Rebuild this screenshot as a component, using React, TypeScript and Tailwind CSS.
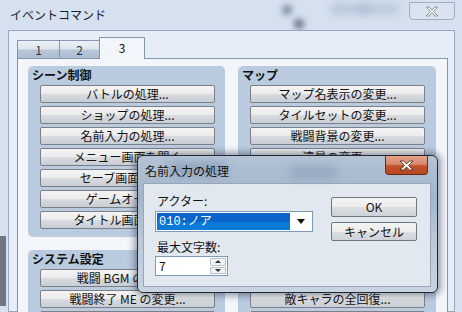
import React from "react";

const sceneButtons = [
    "バトルの処理...",
    "ショップの処理...",
    "名前入力の処理...",
    "メニュー画面を開く",
    "セーブ画面を開く",
    "ゲームオーバー",
    "タイトル画面に戻す",
];
const systemButtons = ["戦闘 BGM の変更...", "戦闘終了 ME の変更...", "セーブ禁止の変更..."];
const mapButtons = ["マップ名表示の変更...", "タイルセットの変更...", "戦闘背景の変更...", "遠景の変更...", "指定位置の情報取得..."];
const battleButtons = ["敵キャラの HP 増減...", "敵キャラの MP 増減...", "敵キャラのステート変更...", "敵キャラの全回復...", "敵キャラの出現..."];

function CmdButton({ label }: { label: string }) {
    return (
        <div className="h-[18px] w-[175px] shrink-0 flex items-center justify-center rounded-[2px] border border-[#7b8087] bg-[linear-gradient(#f4f4f4_0%,#ebebeb_50%,#d9dce0_50%,#c9ced6_100%)] text-[12px] leading-none text-[#111]">
            {label}
        </div>
    );
}

function Group({ title, items }: { title: string; items: string[] }) {
    return (
        <div className="rounded-[5px] bg-[#bacbdf] pl-[12px] pr-[10px] pb-[8px]">
            <div className="h-[19px] -ml-[8px] flex items-center pb-[1px] text-[12px] font-bold leading-none text-[#111]">{title}</div>
            <div className="flex flex-col gap-[3px]">
                {items.map((it) => (
                    <CmdButton key={it} label={it} />
                ))}
            </div>
        </div>
    );
}

function DlgButton({ label, h }: { label: string; h: string }) {
    return (
        <div className={`${h} w-[86px] flex items-center justify-center rounded-[2px] border border-[#6f7782] bg-[linear-gradient(#f4f4f4_0%,#ececec_50%,#dcdfe3_50%,#cdd2d8_100%)] text-[12px] leading-none text-[#111]`}>
            {label}
        </div>
    );
}

export default function App() {
    return (
        <div className="relative w-[462px] h-[312px] overflow-hidden bg-[#d5e1ee] font-['Noto_Sans_CJK_JP','Liberation_Sans',sans-serif]">
            {/* glass spots */}
            <div className="absolute left-[282px] top-[5px] w-[10px] h-[10px] rounded-full bg-[#4d5e7c] blur-[3px] opacity-70" />
            <div className="absolute left-[294px] top-[19px] w-[10px] h-[10px] rounded-full bg-[#3e4d68] blur-[3px] opacity-80" />
            <div className="absolute left-[330px] top-[4px] w-[40px] h-[10px] rounded-full bg-[#a5b7cf] blur-[4px] opacity-70" />
            <div className="absolute left-[360px] top-[4px] w-[40px] h-[10px] rounded-full bg-[#a5b7cf] blur-[4px] opacity-60" />
            <div className="absolute left-0 top-[236px] w-[6px] h-[70px] bg-[#2b2f36] opacity-60" />

            {/* close button */}
            <div className="absolute left-[409px] top-[2px] w-[46px] h-[18px] rounded-b-[4px] border border-[#9fb0c6] bg-[#dde6f1]/60 flex items-center justify-center">
                <svg width="14" height="11" viewBox="0 0 14 11">
                    <path d="M1 1h3l3 3 3-3h3l-4.5 4.5L13 10h-3L7 7l-3 3H1l4.5-4.5z" fill="#eef2f7" stroke="#7f8a99" strokeWidth="0.9" />
                </svg>
            </div>

            {/* title bar */}
            <div className="relative h-[30px] flex items-center pl-[10px] text-[12px] leading-none text-[#1a1f28]">
                イベントコマンド
            </div>

            {/* client */}
            <div className="relative ml-[8px] w-[447px] h-[282px] border border-[#95a8c2] bg-[#e6edf6] pt-[6px] pl-[8px]">
                <div className="flex items-end h-[21px]">
                    <div className="w-[43px] h-[18px] border border-[#8296b1] border-b-0 bg-[linear-gradient(#edf1f6_0%,#dde5ee_45%,#b6c6d8_55%,#aebfd3_100%)] flex items-center justify-center text-[12px] leading-none text-[#333]">
                        1
                    </div>
                    <div className="w-[41px] h-[18px] -ml-px border border-[#8296b1] border-b-0 bg-[linear-gradient(#edf1f6_0%,#dde5ee_45%,#b6c6d8_55%,#aebfd3_100%)] flex items-center justify-center text-[12px] leading-none text-[#333]">
                        2
                    </div>
                    <div className="relative z-10 w-[46px] h-[22px] -ml-px -mb-px border border-[#8296b1] border-b-0 bg-[#f2f5f9] flex items-center justify-center pb-[2px] text-[12px] leading-none text-[#111]">
                        3
                    </div>
                </div>
                <div className="w-[431px] h-[260px] border border-[#8296b1] bg-[#f2f5f9] flex gap-[13px] pl-[10px] pt-[7px]">
                    <div className="w-[197px] flex flex-col gap-[13px]">
                        <Group title="シーン制御" items={sceneButtons} />
                        <Group title="システム設定" items={systemButtons} />
                    </div>
                    <div className="w-[198px] flex flex-col gap-[13px]">
                        <Group title="マップ" items={mapButtons} />
                        <Group title="バトル" items={battleButtons} />
                    </div>
                </div>
            </div>

            {/* dialog */}
            <div className="absolute left-[137px] top-[155px] w-[301px] h-[138px] rounded-[6px] border border-[#23272e] bg-[linear-gradient(#b4c3d6_0%,#a3b4ca_30%,#b9c7d8_60%,#c8d4e2_100%)] shadow-[0_0_6px_3px_rgba(40,55,80,0.45)]">
                <div className="absolute left-[30px] top-[6px] w-[60px] h-[14px] rounded-full bg-[#7f93ae] blur-[5px] opacity-60" />
                <div className="absolute left-[150px] top-[10px] w-[50px] h-[12px] rounded-full bg-[#8799b3] blur-[5px] opacity-60" />
                <div className="absolute left-[247px] top-0 w-[43px] h-[19px] rounded-b-[4px] border border-[#6b2a18] border-t-0 bg-[linear-gradient(#e6a287_0%,#d98a6c_45%,#c2522c_55%,#b8471f_100%)] flex items-center justify-center">
                    <svg width="15" height="11" viewBox="0 0 15 11">
                        <path d="M1 1h3.5l3 3 3-3H14l-4.5 4.5L14 10h-3.5l-3-3-3 3H1l4.5-4.5z" fill="#ffffff" stroke="#4a3530" strokeWidth="0.9" />
                    </svg>
                </div>
                <div className="relative h-[27px] flex items-center pl-[7px] pt-[2px] text-[12px] leading-none text-[#111]">名前入力の処理</div>
                <div className="ml-[5px] w-[288px] h-[104px] border border-[#97a6b8] bg-[#e2e8ef] flex pl-[11px] pt-[10px]">
                    <div className="w-[158px] flex flex-col">
                        <div className="h-[14px] flex items-center pl-[2px] text-[12px] leading-none text-[#111]">アクター:</div>
                        <div className="mt-[3px] h-[21px] w-[158px] border border-[#7f9ab8] bg-white flex items-center p-[1px]">
                            <div className="h-[17px] w-[133px] bg-[linear-gradient(#0a64c9_0%,#0a64c9_55%,#0a7ad8_55%,#0a7ad8_100%)] flex items-center pl-[2px] text-[12px] leading-none text-white font-['Liberation_Mono','Noto_Sans_CJK_JP',monospace]">
                                010:ノア
                            </div>
                            <div className="flex-1 flex items-center justify-center">
                                <svg width="8" height="5" viewBox="0 0 8 5">
                                    <path d="M0 0h8L4 5z" fill="#111" />
                                </svg>
                            </div>
                        </div>
                        <div className="mt-[8px] h-[14px] flex items-center pl-[2px] text-[12px] leading-none text-[#111]">最大文字数:</div>
                        <div className="mt-[2px] h-[20px] w-[73px] border border-[#7f9ab8] bg-white flex items-center">
                            <div className="flex-1 pl-[3px] text-[12px] leading-none text-[#111]">7</div>
                            <div className="w-[18px] h-full flex flex-col gap-px p-px">
                                <div className="flex-1 rounded-[1px] border border-[#b8c3cf] bg-[#eef1f5] flex items-center justify-center">
                                    <svg width="6" height="3" viewBox="0 0 6 3"><path d="M0 3h6L3 0z" fill="#333" /></svg>
                                </div>
                                <div className="flex-1 rounded-[1px] border border-[#b8c3cf] bg-[#eef1f5] flex items-center justify-center">
                                    <svg width="6" height="3" viewBox="0 0 6 3"><path d="M0 0h6L3 3z" fill="#333" /></svg>
                                </div>
                            </div>
                        </div>
                    </div>
                    <div className="ml-[18px] pt-[3px] flex flex-col gap-[5px]">
                        <DlgButton label="OK" h="h-[20px]" />
                        <DlgButton label="キャンセル" h="h-[19px]" />
                    </div>
                </div>
            </div>
        </div>
    );
}
